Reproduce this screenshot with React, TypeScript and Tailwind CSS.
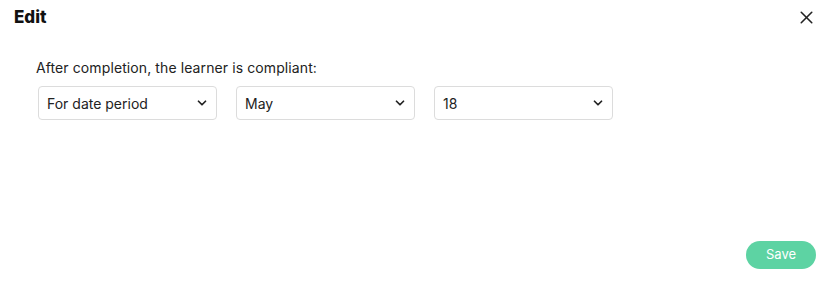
import { ChevronDown, X } from "lucide-react";

const FIELDS = [
  { value: "For date period" },
  { value: "May" },
  { value: "18" },
];

export default function App() {
  return (
    <div className="w-[830px] h-[286px] bg-white flex flex-col font-['Inter',sans-serif] text-[#1f1f1f]">
      {/* HEADER */}
      <div className="flex items-center justify-between pl-[14px] pr-[13px] pt-[1px] h-[34px]">
        <h1 className="text-[17px] font-extrabold text-[#111]">Edit</h1>
        <X size={21} strokeWidth={1.8} className="text-[#222]" />
      </div>

      {/* BODY */}
      <div className="pl-[36px] pt-[23px] flex-1">
        <p className="text-[14px] tracking-[0.1px] text-[#222]">After completion, the learner is compliant:</p>
        <div className="mt-[8px] pl-[2px] flex gap-[19px]">
          {FIELDS.map((f, i) => (
            <div
              key={i}
              className="w-[179px] h-[34px] border border-[#dcdcdc] rounded-[4px] flex items-center justify-between pl-[8px] pr-[7px] text-[14px] text-[#222]"
            >
              <span>{f.value}</span>
              <ChevronDown size={14} strokeWidth={3} className="text-[#222]" />
            </div>
          ))}
        </div>
      </div>

      {/* FOOTER */}
      <div className="flex justify-end pr-[14px] pb-[17px]">
        <button className="w-[70px] h-[28px] rounded-full bg-[#5dd3a3] text-white text-[13px]">
          Save
        </button>
      </div>
    </div>
  );
}
